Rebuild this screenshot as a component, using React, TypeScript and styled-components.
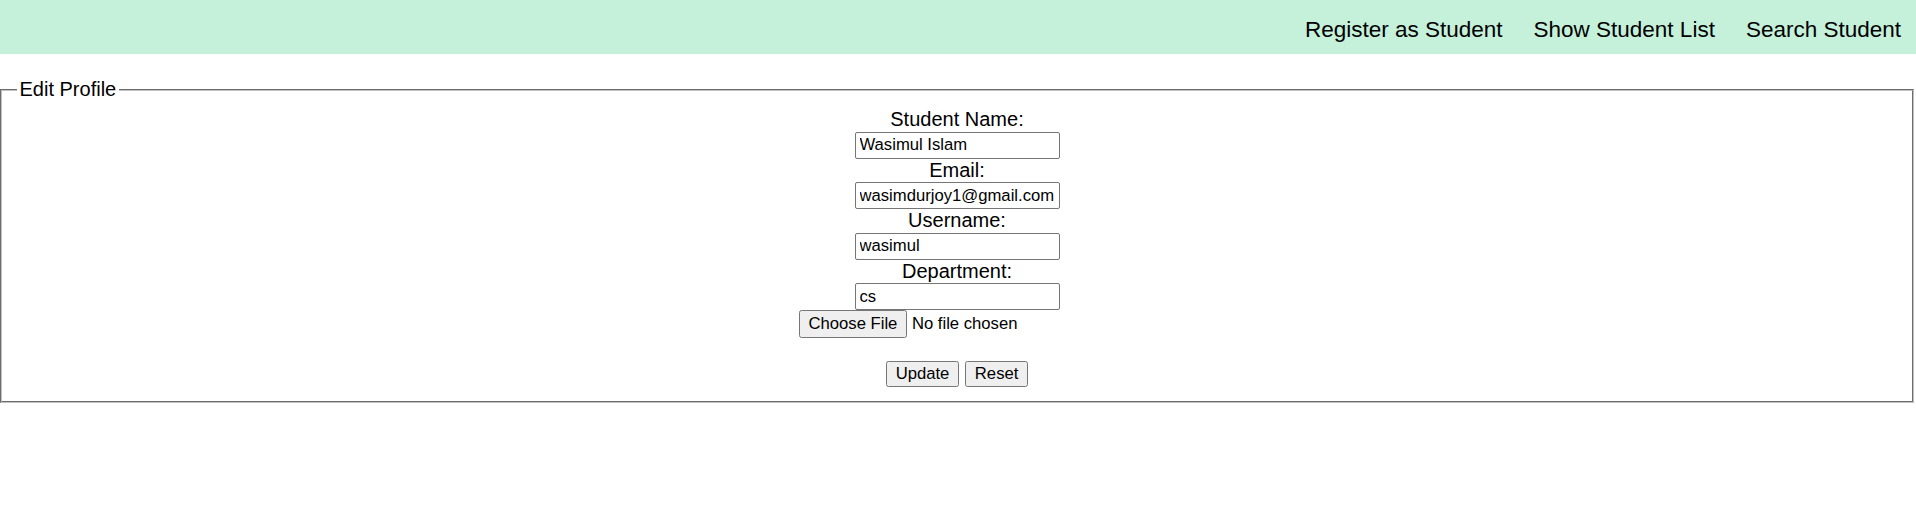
import React from "react";
import styled, { createGlobalStyle } from "styled-components";

const GlobalStyle = createGlobalStyle`
  html, body {
    margin: 0;
    padding: 0;
    background: #ffffff;
    font-family: "Liberation Sans", Arial, sans-serif;
    color: #000000;
  }
`;

const NavBar = styled.nav`
  box-sizing: border-box;
  height: 54px;
  background: rgb(197, 241, 218);
  display: flex;
  justify-content: flex-end;
  align-items: center;
  gap: 31px;
  padding: 6px 15px 0 0;
  font-size: 22.5px;
`;

const NavLink = styled.a`
  color: #000000;
  text-decoration: none;
  cursor: pointer;
`;

const Frame = styled.fieldset`
  margin: 24px 2px 0 0;
  padding: 7px 15px 13.5px;
  border: 2px groove rgb(192, 192, 192);
  min-width: 0;
  font-size: 20px;
`;

const Caption = styled.legend`
  padding: 0 2.5px;
  font-size: 20px;
  line-height: 23px;
`;

const Form = styled.form`
  display: flex;
  flex-direction: column;
  align-items: center;
`;

const Label = styled.label`
  display: block;
  height: 23.5px;
  line-height: 23px;
  font-size: 20px;
  text-align: center;
`;

const TextInput = styled.input`
  box-sizing: border-box;
  width: 205px;
  height: 27px;
  margin: 0;
  padding: 0 4px;
  border: 1px solid #767676;
  border-radius: 2px;
  font-family: "Liberation Sans", Arial, sans-serif;
  font-size: 16.67px;
  color: #000000;
  background: #ffffff;
  outline: none;
`;

const FileRow = styled.div`
  width: 316px;
  height: 27.5px;
  display: flex;
  align-items: center;
  gap: 5px;
  font-size: 16.67px;
`;

const Button = styled.button<{ $h?: number }>`
  box-sizing: border-box;
  height: ${(p) => p.$h ?? 26.5}px;
  margin: 0;
  padding: 1px 8.5px 0;
  border: 1px solid #767676;
  border-radius: 2.5px;
  background: #efefef;
  font-family: "Liberation Sans", Arial, sans-serif;
  font-size: 16.67px;
  color: #000000;
  line-height: 1;
`;

const ButtonRow = styled.div`
  margin-top: 23px;
  display: flex;
  gap: 6.5px;
`;

export default function App() {
  return (
    <>
      <GlobalStyle />
      <NavBar>
        <NavLink>Register as Student</NavLink>
        <NavLink>Show Student List</NavLink>
        <NavLink>Search Student</NavLink>
      </NavBar>
      <Frame>
        <Caption>Edit Profile</Caption>
        <Form onSubmit={(e) => e.preventDefault()}>
          <Label htmlFor="name">Student Name:</Label>
          <TextInput id="name" defaultValue="Wasimul Islam" />
          <Label htmlFor="email">Email:</Label>
          <TextInput id="email" defaultValue="wasimdurjoy1@gmail.com" />
          <Label htmlFor="username">Username:</Label>
          <TextInput id="username" defaultValue="wasimul" />
          <Label htmlFor="dept">Department:</Label>
          <TextInput id="dept" defaultValue="cs" />
          <FileRow>
            <Button type="button" $h={27.5}>Choose File</Button>
            <span>No file chosen</span>
          </FileRow>
          <ButtonRow>
            <Button type="submit">Update</Button>
            <Button type="reset">Reset</Button>
          </ButtonRow>
        </Form>
      </Frame>
    </>
  );
}
